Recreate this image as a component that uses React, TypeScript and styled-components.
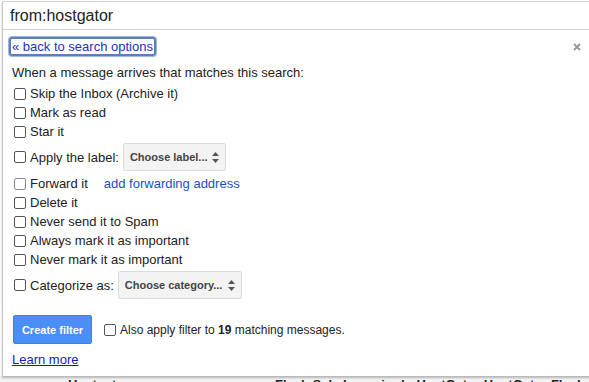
import React from 'react';
import styled, { createGlobalStyle } from 'styled-components';

const GlobalStyle = createGlobalStyle`
	html, body {
		margin: 0;
		padding: 0;
		background: #fff;
		overflow: hidden;
	}
	body {
		font-family: Arial, "Liberation Sans", sans-serif;
		color: #222;
	}
`;

const Page = styled.div`
	width: 589px;
	height: 382px;
	overflow: hidden;
	background: #fff;
`;

const Panel = styled.div`
	position: relative;
	z-index: 1;
	margin: 1px 0 0 2px;
	width: 600px;
	height: 375px;
	box-sizing: border-box;
	border-top: 1px solid #d0d0d0;
	border-left: 1px solid #c8c8c8;
	background: #fff;
	box-shadow: 0 2px 2px rgba(0, 0, 0, 0.25);
`;

const SearchBar = styled.div`
	height: 27px;
	border-bottom: 1px solid #cfcfcf;
	padding-left: 7px;
	font-size: 16px;
	line-height: 27px;
	color: #222;
`;

const Body = styled.div`
	padding: 7px 0 0 9px;
	width: 577px;
	font-size: 13px;
	color: #222;
`;

const TopRow = styled.div`
	display: flex;
	justify-content: space-between;
	align-items: center;
	height: 19px;
`;

const BackLink = styled.a`
	display: inline-block;
	height: 15px;
	margin-left: -3px;
	line-height: 15px;
	padding: 0 1px;
	color: #2233bb;
	text-decoration: none;
	border: 2px solid #5b7fb8;
	border-radius: 3px;
	box-shadow: 0 0 0 1px #9fb7dd;
`;

const Close = styled.span`
	width: 8px;
	height: 8px;
	margin-right: 8px;
	display: flex;
`;

const Line = styled.div<{ $mt?: number }>`
	display: flex;
	align-items: center;
	height: 19px;
	margin-top: ${(p) => p.$mt ?? 0}px;
	white-space: nowrap;
`;

const SelectLine = styled(Line)`
	height: 28px;
`;

const Box = styled.span<{ $faded?: boolean }>`
	display: inline-block;
	box-sizing: border-box;
	width: 12px;
	height: 12px;
	margin: 0 4px 0 2px;
	border: 1px solid ${(p) => (p.$faded ? '#8a8a8a' : '#555')};
	border-radius: 2px;
	background: #fff;
	flex-shrink: 0;
`;

const Select = styled.div<{ $w: number }>`
	display: flex;
	align-items: center;
	justify-content: space-between;
	box-sizing: border-box;
	width: ${(p) => p.$w}px;
	height: 28px;
	margin-left: 4px;
	padding: 0 6px 0 6px;
	background: #f3f3f3;
	border: 1px solid #dcdcdc;
	border-radius: 2px;
	font-size: 11px;
	font-weight: bold;
	color: #444;
`;

const Arrows = styled.svg`
	width: 7px;
	height: 11px;
	flex-shrink: 0;
`;

const FwdLink = styled.a`
	margin-left: 16px;
	color: #1a4fc4;
	text-decoration: none;
`;

const Footer = styled.div`
	display: flex;
	align-items: center;
	margin-top: 16px;
	padding-left: 1px;
`;

const FooterLabel = styled.span`
	font-size: 12px;
`;

const CreateButton = styled.button`
	width: 79px;
	height: 29px;
	border: 1px solid #3b82f0;
	border-radius: 2px;
	background: #4a8ef8;
	color: #fff;
	font-family: Arial, "Liberation Sans", sans-serif;
	font-size: 11px;
	font-weight: bold;
	padding: 0;
	margin-right: 10px;
`;

const Learn = styled.a`
	display: block;
	margin-top: 7px;
	line-height: 18px;
	color: #1a1ab8;
	text-decoration: underline;
`;

const BehindRow = styled.div`
	display: flex;
	height: 8px;
	overflow: hidden;
	background: #f2f2f2;
	font-size: 13px;
	font-weight: bold;
	line-height: 17px;
	color: #222;
	white-space: nowrap;
`;

const BehindCell = styled.span<{ $w: number }>`
	flex: 0 0 ${(p) => p.$w}px;
`;

const SelectArrows = () => (
	<Arrows viewBox="0 0 7 11">
		<path d="M3.5 0 L7 4 L0 4 Z M3.5 11 L7 7 L0 7 Z" fill="#555" />
	</Arrows>
);

const Check: React.FC<{ label: React.ReactNode; mt?: number; faded?: boolean; children?: React.ReactNode }> = ({ label, mt, faded, children }) => (
	<Line $mt={mt}>
		<Box $faded={faded} />
		<span>{label}</span>
		{children}
	</Line>
);

const App: React.FC = () => {
	return (
		<Page>
			<GlobalStyle />
			<Panel>
				<SearchBar>from:hostgator</SearchBar>
				<Body>
					<TopRow>
						<BackLink href="#">« back to search options</BackLink>
						<Close>
							<svg viewBox="0 0 8 8" width="8" height="8">
								<path d="M1 1 L7 7 M7 1 L1 7" stroke="#999" strokeWidth="2" />
							</svg>
						</Close>
					</TopRow>
					<Line $mt={7}>When a message arrives that matches this search:</Line>
					<Check label="Skip the Inbox (Archive it)" mt={2} />
					<Check label="Mark as read" />
					<Check label="Star it" />
					<SelectLine $mt={2}>
						<Box />
						<span>Apply the label:</span>
						<Select $w={103}>
							<span>Choose label...</span>
							<SelectArrows />
						</Select>
					</SelectLine>
					<Check label="Forward it" mt={3} faded>
						<FwdLink href="#">add forwarding address</FwdLink>
					</Check>
					<Check label="Delete it" />
					<Check label="Never send it to Spam" />
					<Check label="Always mark it as important" />
					<Check label="Never mark it as important" />
					<SelectLine $mt={2}>
						<Box />
						<span>Categorize as:</span>
						<Select $w={124}>
							<span>Choose category...</span>
							<SelectArrows />
						</Select>
					</SelectLine>
					<Footer>
						<CreateButton>Create filter</CreateButton>
						<Box />
						<FooterLabel>
							Also apply filter to <b>19</b> matching messages.
						</FooterLabel>
					</Footer>
					<Learn href="#">Learn more</Learn>
				</Body>
			</Panel>
			<BehindRow>
				<BehindCell $w={68} />
				<BehindCell $w={207}>Hostgator</BehindCell>
				<BehindCell $w={314}>Flash Sale Incoming! - HostGator HostGator Flash Sale</BehindCell>
			</BehindRow>
		</Page>
	);
};

export default App;
